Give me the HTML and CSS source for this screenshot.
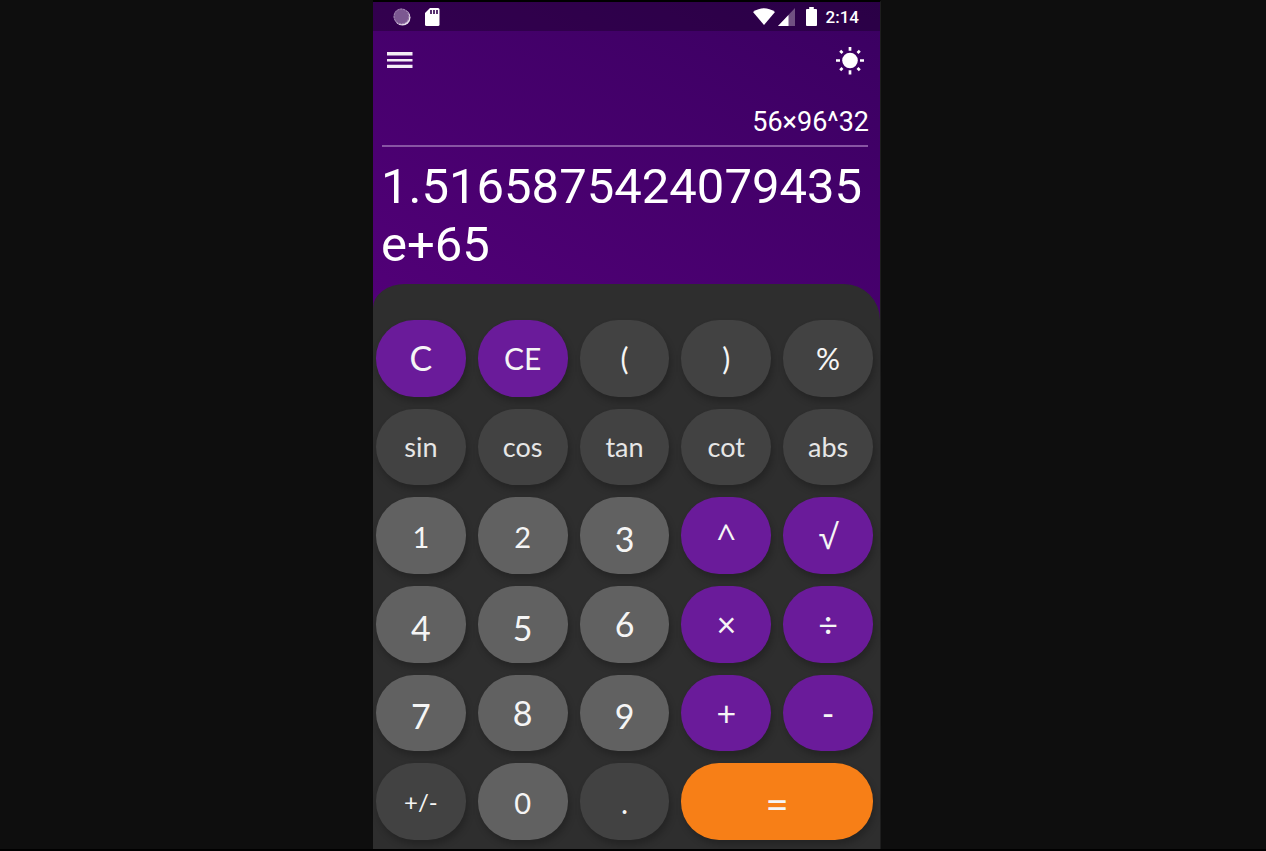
FILE: index.html
```html
<!DOCTYPE html>
<html lang="en">
<head>
<meta charset="utf-8">
<meta name="viewport" content="width=device-width, initial-scale=1">
<title>Calculator</title>
<link rel="stylesheet" href="styles.css">
</head>
<body>
<main class="phone">
  <div class="status">
    <div class="status-group">
      <svg class="status-icon" width="20" height="20" viewBox="0 0 20 20" aria-hidden="true"><circle cx="10.5" cy="10.5" r="8" fill="#e6dcea"/><circle cx="9.4" cy="9.4" r="7.9" fill="#7c5891"/><circle cx="9.4" cy="9.4" r="7.3" fill="none" stroke="#a68bb5" stroke-dasharray="2 1"/></svg>
      <svg class="status-icon" width="16" height="20" viewBox="0 0 16 20" aria-hidden="true"><path d="M6 1h8q1.500 0 1.500 1.500v15q0 1.500-1.500 1.500H2.500Q1 19 1 17.500V6z" fill="#fff"/><path d="M6 3h2v4H6zM9 3h2v4H9zM12 3h2v4h-2z" fill="#56306f"/></svg>
    </div>
    <div class="status-group status-right">
      <svg width="22" height="20" viewBox="0 0 22 20" aria-hidden="true"><path d="M0 5Q11-2.500 22 5L11 18z" fill="#fff"/></svg>
      <svg width="17" height="18" viewBox="0 0 17 18" aria-hidden="true"><path d="M17 0v18H0z" fill="#705082"/><path d="M10.500 7v11H0z" fill="#fff"/></svg>
      <svg class="battery" width="11" height="19" viewBox="0 0 12 19" preserveAspectRatio="none" aria-hidden="true"><path d="M3.500 0h5v2H11q1 0 1 1v15q0 1-1 1H1q-1 0-1-1V3q0-1 1-1h2.500z" fill="#fff"/></svg>
      <span class="clock">2:14</span>
    </div>
  </div>
  <header class="toolbar">
    <button class="icon-button" type="button" aria-label="Menu">
      <svg width="26" height="18" viewBox="0 0 26 18" aria-hidden="true"><path d="M0 0h25.500v3.500H0zM0 7h25.500v2.600H0zM0 12.700h25.500V16H0z" fill="#f4ecf6"/></svg>
    </button>
    <button class="icon-button" type="button" aria-label="Light theme">
      <svg width="28" height="28" viewBox="0 0 28 28" aria-hidden="true"><circle cx="14" cy="13.500" r="7.800" fill="#fff"/><path d="M14 0v3.700M14 23.300v4.200M0 13.500h4M24 13.500h4M4.200 3.700l2.300 2.300M21.500 21l2.300 2.300M23.800 3.700l-2.300 2.300M6.500 21l-2.300 2.300" stroke="#fff" stroke-width="2.700"/></svg>
    </button>
  </header>
  <section class="display" aria-label="Display">
    <div class="expression">56×96^32</div>
    <output class="result">1.5165875424079435e+65</output>
  </section>
  <section class="keypad" aria-label="Keypad">
    <button class="key accent" type="button">C</button>
    <button class="key accent medium" type="button">CE</button>
    <button class="key medium" type="button">(</button>
    <button class="key medium" type="button">)</button>
    <button class="key medium" type="button">%</button>
    <button class="key word" type="button">sin</button>
    <button class="key word" type="button">cos</button>
    <button class="key word" type="button">tan</button>
    <button class="key word" type="button">cot</button>
    <button class="key word" type="button">abs</button>
    <button class="key digit short" type="button">1</button>
    <button class="key digit short" type="button">2</button>
    <button class="key digit low" type="button">3</button>
    <button class="key accent math" type="button">^</button>
    <button class="key accent math" type="button">√</button>
    <button class="key digit low" type="button">4</button>
    <button class="key digit low" type="button">5</button>
    <button class="key digit" type="button">6</button>
    <button class="key accent sign" type="button">×</button>
    <button class="key accent sign" type="button">÷</button>
    <button class="key digit low" type="button">7</button>
    <button class="key digit" type="button">8</button>
    <button class="key digit low" type="button">9</button>
    <button class="key accent sign" type="button">+</button>
    <button class="key accent sign" type="button">-</button>
    <button class="key small" type="button">+/-</button>
    <button class="key digit short" type="button">0</button>
    <button class="key medium" type="button">.</button>
    <button class="key equals" type="button">=</button>
  </section>
</main>
</body>
</html>
```
FILE: styles.css
```css
* {
  box-sizing: border-box;
}

body {
  margin: 0;
  min-height: 100vh;
  display: flex;
  justify-content: center;
  padding-right: 12px;
  background: #0e0e0e;
  border-bottom: 2px solid #000;
  font-family: Roboto, "Liberation Sans", sans-serif;
  color: #fff;
}

.phone {
  width: 100%;
  max-width: 508px;
  display: flex;
  flex-direction: column;
  border-top: 2px solid #000;
  border-right: 1px solid #1e1e1e;
  background: #2e2e2e linear-gradient(28deg, #520078, #3a0061) no-repeat top / 100% 320px;
}

.status {
  display: flex;
  justify-content: space-between;
  align-items: center;
  height: 29px;
  padding: 0 21px 0 19px;
  background: rgba(0, 0, 0, 0.27);
}

.status-group {
  display: flex;
  align-items: center;
  gap: 12px;
}

.status-right {
  gap: 3px;
}

.battery {
  margin: 0 6px 0 8px;
}

.clock {
  font-size: 17px;
  line-height: 20px;
  font-weight: 500;
}

.toolbar {
  display: flex;
  justify-content: space-between;
  align-items: center;
  height: 59px;
  padding: 0 8px 0 6px;
}

.icon-button {
  display: flex;
  align-items: center;
  justify-content: center;
  height: 44px;
  padding: 0 8px;
  border: 0;
  background: none;
}

.display {
  padding: 15px 12px 10px 9px;
}

.expression {
  margin-right: -1px;
  padding-bottom: 6px;
  font-size: 27px;
  line-height: 34px;
  text-align: right;
}

.result {
  display: block;
  margin: 0 -4px 0 -1px;
  padding-top: 13px;
  font-size: 49px;
  line-height: 58px;
  overflow-wrap: anywhere;
  position: relative;
}

.result::before {
  content: "";
  position: absolute;
  top: 0;
  left: 1px;
  right: 4px;
  height: 2px;
  background: #8855a4;
}

.keypad {
  flex: 1;
  display: grid;
  grid-template-columns: repeat(5, minmax(0, 1fr));
  grid-auto-rows: minmax(60px, 1fr);
  gap: 12px;
  padding: 36px 7px 9px 3px;
  border-radius: 32px 36px 0 0 / 24px 36px 0 0;
  background: #2e2e2e;
}

.key {
  padding: 0;
  border: 0;
  border-radius: 38px;
  background: #424242;
  box-shadow: 2px 5px 7px rgba(0, 0, 0, 0.22);
  color: #f5f5f5;
  font-family: Lato, "Open Sans", sans-serif;
  font-size: 34px;
  font-weight: 400;
  line-height: 40px;
}

.accent {
  background: #6a1b9a;
}

.digit {
  background: #616161;
}

.medium {
  font-size: 30px;
}

.word {
  font-size: 27px;
  color: #e6e6e6;
}

.short {
  padding-top: 3px;
  font-size: 29px;
}

.low {
  padding-top: 7px;
}

.math {
  font-family: "Open Sans", Roboto, sans-serif;
}

.sign {
  font-size: 34px;
}

.small {
  font-size: 24px;
}

.equals {
  padding-top: 5px;
  grid-column: span 2;
  background: #f77f17;
  font-size: 40px;
}
```
